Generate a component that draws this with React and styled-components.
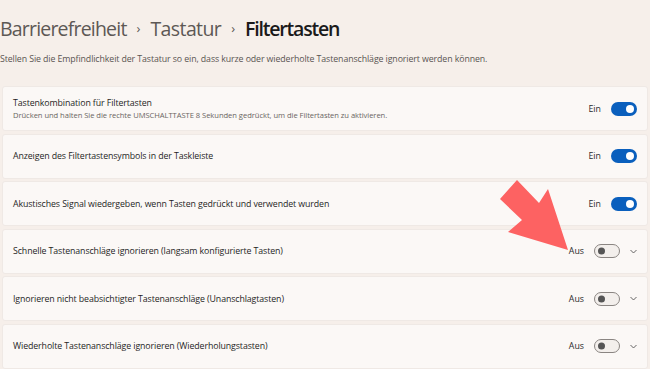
import React from "react";
import styled, { createGlobalStyle } from "styled-components";

const GlobalStyle = createGlobalStyle`
  html, body {
    margin: 0;
    padding: 0;
    background: #f6efea;
  }
  body {
    font-family: "Open Sans", "Noto Sans", sans-serif;
    color: #1b1b1b;
    overflow: hidden;
  }
`;

const Page = styled.div`
  position: relative;
  width: 650px;
  height: 369px;
  background: #f6efea;
  overflow: hidden;
`;

const Breadcrumb = styled.h1`
  display: flex;
  align-items: center;
  gap: 10px;
  margin: 0;
  padding: 13px 0 0 0;
  height: 30px;
  font-size: 19.5px;
  font-weight: 400;
`;

const Crumb = styled.span`
  color: ${(p) => (p.$current ? "#1a1a1a" : "#5d5855")};
  font-weight: ${(p) => (p.$current ? 600 : 400)};
  letter-spacing: ${(p) => p.$spacing};
`;

const Sep = styled.span`
  color: #5d5855;
  font-size: 13px;
`;

const Intro = styled.p`
  margin: 10px 0 0 0;
  font-size: 8.8px;
  color: #5a5552;
  letter-spacing: -0.1px;
`;

const List = styled.div`
  display: flex;
  flex-direction: column;
  gap: 2.6px;
  margin: 21px 2px 0 2px;
`;

const Card = styled.div`
  display: flex;
  align-items: center;
  height: 45px;
  padding: 0 10px;
  box-sizing: border-box;
  background: #fbf8f6;
  border: 1px solid #efe9e5;
  border-radius: 3px;
`;

const Text = styled.div`
  flex: 1;
  display: flex;
  flex-direction: column;
  gap: 1px;
`;

const Title = styled.div`
  font-size: 8.8px;
  color: #1f1f1f;
  letter-spacing: -0.1px;
`;

const Desc = styled.div`
  font-size: 7.6px;
  color: #6a6562;
  letter-spacing: -0.05px;
`;

const State = styled.span`
  font-size: 8.8px;
  color: #2a2a2a;
  margin-right: 10px;
`;

const Toggle = styled.span`
  position: relative;
  width: 26px;
  height: 14px;
  box-sizing: border-box;
  border-radius: 7px;
  background: ${(p) => (p.$on ? "#0a5fbd" : "#f3efec")};
  border: ${(p) => (p.$on ? "none" : "1px solid #8a8582")};

  &::after {
    content: "";
    position: absolute;
    top: 50%;
    transform: translateY(-50%);
    left: ${(p) => (p.$on ? "15px" : "3px")};
    width: ${(p) => (p.$on ? "8px" : "7px")};
    height: ${(p) => (p.$on ? "8px" : "7px")};
    border-radius: 50%;
    background: ${(p) => (p.$on ? "#ffffff" : "#555")};
  }
`;

const Chevron = styled.svg`
  margin-left: 10px;
  width: 7px;
  height: 5px;
`;

const Arrow = styled.svg`
  position: absolute;
  left: 0;
  top: 0;
  pointer-events: none;
`;

const rows = [
  {
    title: "Tastenkombination für Filtertasten",
    desc: "Drücken und halten Sie die rechte UMSCHALTTASTE 8 Sekunden gedrückt, um die Filtertasten zu aktivieren.",
    on: true,
  },
  { title: "Anzeigen des Filtertastensymbols in der Taskleiste", on: true },
  { title: "Akustisches Signal wiedergeben, wenn Tasten gedrückt und verwendet wurden", on: true },
  { title: "Schnelle Tastenanschläge ignorieren (langsam konfigurierte Tasten)", on: false, expand: true },
  { title: "Ignorieren nicht beabsichtigter Tastenanschläge (Unanschlagtasten)", on: false, expand: true },
  { title: "Wiederholte Tastenanschläge ignorieren (Wiederholungstasten)", on: false, expand: true },
];

export default function App() {
  return (
    <Page>
      <GlobalStyle />
      <Breadcrumb>
        <Crumb $spacing="-0.8px">Barrierefreiheit</Crumb>
        <Sep>›</Sep>
        <Crumb $spacing="-0.6px">Tastatur</Crumb>
        <Sep>›</Sep>
        <Crumb $current $spacing="-1.2px">Filtertasten</Crumb>
      </Breadcrumb>
      <Intro>
        Stellen Sie die Empfindlichkeit der Tastatur so ein, dass kurze oder wiederholte Tastenanschläge ignoriert werden können.
      </Intro>
      <List>
        {rows.map((r) => (
          <Card key={r.title}>
            <Text>
              <Title>{r.title}</Title>
              {r.desc && <Desc>{r.desc}</Desc>}
            </Text>
            <State>{r.on ? "Ein" : "Aus"}</State>
            <Toggle $on={r.on} />
            {r.expand && (
              <Chevron viewBox="0 0 7 5">
                <path d="M0.5 1 L3.5 4 L6.5 1" fill="none" stroke="#555" strokeWidth="0.9" />
              </Chevron>
            )}
          </Card>
        ))}
      </List>
      <Arrow width="650" height="369" viewBox="0 0 650 369">
        <polygon
          points="517,180 539,203 548,189 568,250 508,232 522,220 500,199"
          fill="#fd6262"
        />
      </Arrow>
    </Page>
  );
}
